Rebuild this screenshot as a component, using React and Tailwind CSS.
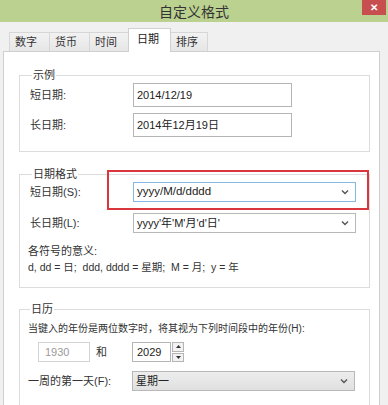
import React from 'react';

const font = { fontFamily: '"Liberation Sans", "Noto Sans CJK SC", sans-serif' };

function Chevron() {
	return (
		<svg width="8" height="6" viewBox="0 0 8 6" className="shrink-0">
			<path d="M1 1.5 L4 4.5 L7 1.5" fill="none" stroke="#555" strokeWidth="1.4" />
		</svg>
	);
}

function Tab({ label, active, w }) {
	return (
		<div
			className={
				active
					? `${w} h-[24px] pl-[8px] pt-[2px] border border-b-0 border-[#d0d0d0] bg-white text-[11px] text-[#222] relative z-10 -mb-px`
					: `${w} h-[19px] pl-[5px] flex items-center border border-b-0 border-r-0 border-[#d6d6d6] bg-gradient-to-b from-[#f2f2f2] to-[#e6e6e6] text-[11px] text-[#333]`
			}
		>
			{label}
		</div>
	);
}

function Legend({ children }) {
	return <legend className="ml-[2px] px-[1px] h-[16px] leading-[16px] text-[11px] text-[#333]">{children}</legend>;
}

function Combo({ value, focused, gray, big }) {
	return (
		<div
			className={`w-[223px] h-[20px] flex items-center justify-between pl-[3px] pr-[6px] border ${
				focused ? 'border-[#86b6e2]' : 'border-[#b8b8b8]'
			} ${gray ? 'bg-gradient-to-b from-[#ededed] to-[#e0e0e0]' : 'bg-white'}`}
		>
			<span className={`${big ? 'text-[11.5px]' : 'text-[11px]'} text-[#222] leading-none`}>{value}</span>
			<Chevron />
		</div>
	);
}

export default function App() {
	return (
		<div className="w-[388px] h-[405px] overflow-hidden bg-[#f0f0f0] relative" style={font}>
			{/* title bar */}
			<div className="h-[22px] bg-[#bbd190] flex items-center justify-center relative">
				<span className="text-[14px] text-[#333] leading-none" style={{ fontFamily: '"Noto Sans CJK SC", sans-serif' }}>
					自定义格式
				</span>
				<div className="absolute right-[2px] top-0 w-[24px] h-[15px] bg-[#c84f4f] flex items-center justify-center text-white text-[10px] font-bold leading-none">
					✕
				</div>
			</div>

			{/* tabs */}
			<div className="pl-[9px] pt-[6px] flex items-end">
				<Tab label="数字" w="w-[40px]" />
				<Tab label="货币" w="w-[40px]" />
				<Tab label="时间" w="w-[39px]" />
				<Tab label="日期" w="w-[43px]" active />
				<div className="w-[37px] h-[19px] pl-[5px] flex items-center border border-b-0 border-l-0 border-[#d6d6d6] bg-gradient-to-b from-[#f2f2f2] to-[#e6e6e6] text-[11px] text-[#333]">
					排序
				</div>
			</div>

			{/* panel */}
			<div className="ml-[3px] w-[377px] h-[360px] bg-white border border-[#cfcfcf] pt-[15px] pl-[15px] pr-[9px]">
				{/* 示例 */}
				<fieldset className="border border-[#dcdcdc] pl-[10px] pb-[14px]">
					<Legend>示例</Legend>
					<div className="flex flex-col gap-[6px]">
						<div className="flex items-center">
							<span className="w-[103px] text-[11px] text-[#333]">短日期:</span>
							<div className="w-[159px] h-[24px] border border-[#b5b5b5] bg-white pl-[3px] pt-[3px] text-[11px] text-[#222]">
								2014/12/19
							</div>
						</div>
						<div className="flex items-center">
							<span className="w-[103px] text-[11px] text-[#333]">长日期:</span>
							<div className="w-[159px] h-[24px] border border-[#b5b5b5] bg-white pl-[3px] pt-[3px] text-[11px] text-[#222]">
								2014年12月19日
							</div>
						</div>
					</div>
				</fieldset>

				{/* 日期格式 */}
				<fieldset className="mt-[14px] border border-[#dcdcdc] pl-[10px] pb-[12px] relative">
					<Legend>日期格式</Legend>
					<div className="flex flex-col gap-[11px]">
						<div className="flex items-center">
							<span className="w-[103px] text-[11px] text-[#333]">短日期(S):</span>
							<Combo value="yyyy/M/d/dddd" focused big />
						</div>
						<div className="flex items-center">
							<span className="w-[103px] text-[11px] text-[#333]">长日期(L):</span>
							<Combo value="yyyy'年'M'月'd'日'" />
						</div>
					</div>
					<div className="mt-[10px] -ml-[2px] leading-[16px] text-[#333]">
						<div className="text-[11px]">各符号的意义:</div>
						<div className="text-[10.5px]">d, dd = 日;&nbsp; ddd, dddd = 星期;&nbsp; M = 月;&nbsp; y = 年</div>
					</div>
					{/* highlight annotation */}
					<div className="absolute left-[87px] top-[-12px] w-[262px] h-[40px] border-2 border-[#d9363d] pointer-events-none" />
				</fieldset>

				{/* 日历 */}
				<fieldset className="mt-[13px] border border-[#dcdcdc] pl-[8px] pb-[14px]">
					<Legend>日历</Legend>
					<div className="mt-[4px] text-[10px] leading-[16px] text-[#333]">
						当键入的年份是两位数字时，将其视为下列时间段中的年份(H):
					</div>
					<div className="mt-[5px] flex items-center">
						<div className="ml-[10px] w-[52px] h-[20px] border border-[#d4d4d4] bg-white pl-[6px] text-[11px] leading-[18px] text-[#9a9a9a]">
							1930
						</div>
						<span className="ml-[6px] w-[36px] text-[11px] text-[#333]">和</span>
						<div className="w-[39px] h-[20px] border border-[#b5b5b5] bg-white pl-[4px] text-[11px] leading-[18px] text-[#222]">
							2029
						</div>
						<div className="ml-[1px] w-[12px] h-[20px] flex flex-col gap-px">
							<div className="h-[9.5px] border border-[#b5b5b5] bg-[#f2f2f2] flex items-center justify-center">
								<svg width="5" height="3" viewBox="0 0 5 3">
									<path d="M0 3 L2.5 0 L5 3 Z" fill="#333" />
								</svg>
							</div>
							<div className="h-[9.5px] border border-[#b5b5b5] bg-[#f2f2f2] flex items-center justify-center">
								<svg width="5" height="3" viewBox="0 0 5 3">
									<path d="M0 0 L2.5 3 L5 0 Z" fill="#333" />
								</svg>
							</div>
						</div>
					</div>
					<div className="mt-[9px] flex items-center">
						<span className="w-[104px] text-[11px] text-[#333]">一周的第一天(F):</span>
						<Combo value="星期一" gray />
					</div>
				</fieldset>
			</div>
		</div>
	);
}
